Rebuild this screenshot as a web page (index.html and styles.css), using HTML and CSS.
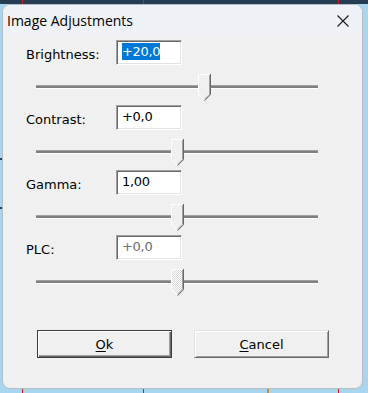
FILE: index.html
```html
<!DOCTYPE html>
<html lang="en">

<head>
    <meta charset="UTF-8">
    <meta name="viewport" content="width=device-width, initial-scale=1.0">
    <title>Image Adjustments</title>
    <link rel="stylesheet" href="styles.css">
</head>

<body>
    <div class="window">
        <div class="titlebar">
            <span class="title">Image Adjustments</span>
            <svg class="close" width="12" height="12" viewBox="0 0 12 12">
                <path d="M0.5 0.5L11.5 11.5M11.5 0.5L0.5 11.5" stroke="#1a1a1a" stroke-width="1.1" fill="none"/>
            </svg>
        </div>
        <div class="content">
            <div class="setting">
                <div class="field">
                    <span class="label">Brightness:</span>
                    <div class="edit"><span class="selected">+20,0</span></div>
                </div>
                <div class="trackbar">
                    <div class="channel"></div>
                    <svg class="thumb" style="left: 162px" width="13" height="27" viewBox="0 0 13 27">
                        <path d="M1 1H12V20.5L6.5 26L1 20.5Z" fill="#f0f0f0"/>
                        <path d="M0.5 20.5V0.5H12" fill="none" stroke="#fff"/>
                        <path d="M0.8 20.8L6.5 26.5" stroke="#fff"/>
                        <path d="M12.5 0V20.7L6.5 26.7" fill="none" stroke="#696969"/>
                        <path d="M11.5 1V20.3L6.5 25.3" fill="none" stroke="#a0a0a0"/>
                    </svg>
                </div>
            </div>

            <div class="setting">
                <div class="field">
                    <span class="label">Contrast:</span>
                    <div class="edit">+0,0</div>
                </div>
                <div class="trackbar">
                    <div class="channel"></div>
                    <svg class="thumb" style="left: 135px" width="13" height="27" viewBox="0 0 13 27">
                        <path d="M1 1H12V20.5L6.5 26L1 20.5Z" fill="#f0f0f0"/>
                        <path d="M0.5 20.5V0.5H12" fill="none" stroke="#fff"/>
                        <path d="M0.8 20.8L6.5 26.5" stroke="#fff"/>
                        <path d="M12.5 0V20.7L6.5 26.7" fill="none" stroke="#696969"/>
                        <path d="M11.5 1V20.3L6.5 25.3" fill="none" stroke="#a0a0a0"/>
                    </svg>
                </div>
            </div>

            <div class="setting">
                <div class="field">
                    <span class="label">Gamma:</span>
                    <div class="edit">1,00</div>
                </div>
                <div class="trackbar">
                    <div class="channel"></div>
                    <svg class="thumb" style="left: 135px" width="13" height="27" viewBox="0 0 13 27">
                        <path d="M1 1H12V20.5L6.5 26L1 20.5Z" fill="#f0f0f0"/>
                        <path d="M0.5 20.5V0.5H12" fill="none" stroke="#fff"/>
                        <path d="M0.8 20.8L6.5 26.5" stroke="#fff"/>
                        <path d="M12.5 0V20.7L6.5 26.7" fill="none" stroke="#696969"/>
                        <path d="M11.5 1V20.3L6.5 25.3" fill="none" stroke="#a0a0a0"/>
                    </svg>
                </div>
            </div>

            <div class="setting">
                <div class="field">
                    <span class="label">PLC:</span>
                    <div class="edit disabled">+0,0</div>
                </div>
                <div class="trackbar">
                    <div class="channel"></div>
                    <svg class="thumb" style="left: 135px" width="13" height="27" viewBox="0 0 13 27">
                        <defs>
                            <pattern id="dither" width="2" height="2" patternUnits="userSpaceOnUse">
                                <rect width="2" height="2" fill="#fff"/>
                                <rect width="1" height="1" fill="#d8d8d8"/>
                                <rect x="1" y="1" width="1" height="1" fill="#d8d8d8"/>
                            </pattern>
                        </defs>
                        <path d="M1 1H12V20.5L6.5 26L1 20.5Z" fill="url(#dither)"/>
                        <path d="M0.5 20.5V0.5H12" fill="none" stroke="#fff"/>
                        <path d="M0.8 20.8L6.5 26.5" stroke="#fff"/>
                        <path d="M12.5 0V20.7L6.5 26.7" fill="none" stroke="#696969"/>
                        <path d="M11.5 1V20.3L6.5 25.3" fill="none" stroke="#a0a0a0"/>
                    </svg>
                </div>
            </div>

            <div class="buttons">
                <div class="button default"><u>O</u>k</div>
                <div class="button"><u>C</u>ancel</div>
            </div>
        </div>
    </div>
</body>

</html>
```

FILE: styles.css
```css
body {
    margin: 0;
    height: 393px;
    overflow: hidden;
    font-family: "DejaVu Sans", Verdana, sans-serif;
    font-size: 13px;
    color: #000;
    background:
        linear-gradient(#e81123, #e81123) 22px 0 / 1px 4px no-repeat,
        linear-gradient(#e81123, #e81123) 143px 0 / 1px 4px no-repeat,
        linear-gradient(#e81123, #e81123) 338px 0 / 1px 4px no-repeat,
        linear-gradient(#e81123, #e81123) 22px 389px / 1px 4px no-repeat,
        linear-gradient(#e81123, #e81123) 143px 389px / 1px 4px no-repeat,
        linear-gradient(#c98a4a, #c98a4a) 267px 389px / 2px 4px no-repeat,
        linear-gradient(#e81123, #e81123) 338px 389px / 1px 4px no-repeat,
        linear-gradient(#2b3f52, #2b3f52) 0 158px / 2px 2px no-repeat,
        linear-gradient(#2b3f52, #2b3f52) 0 207px / 2px 2px no-repeat,
        linear-gradient(#263c52, #263c52) 0 0 / 100% 4px no-repeat,
        #a9d6ef;
}

.window {
    box-sizing: border-box;
    width: 361px;
    height: 385px;
    margin: 4px 0 0 2px;
    border: 1px solid #b4bcc4;
    border-radius: 8px;
    background-color: #f0f0f0;
    overflow: hidden;
}

.titlebar {
    display: flex;
    align-items: center;
    justify-content: space-between;
    height: 29px;
    padding-top: 1px;
    box-sizing: border-box;
    background-color: #eef2f7;
}

.title {
    padding-left: 4px;
    font-family: "Open Sans", "Noto Sans", sans-serif;
    font-size: 14px;
    color: #000;
}

.close {
    margin-right: 13px;
    margin-top: 2px;
}

.content {
    padding: 6px 0 0 23px;
}

.setting {
    height: 65px;
}

.field {
    display: flex;
    align-items: center;
    height: 25px;
}

.label {
    width: 90px;
    padding-top: 3px;
}

.edit {
    box-sizing: border-box;
    width: 66px;
    height: 25px;
    padding: 2px 0 0 5px;
    line-height: 17px;
    background-color: #fff;
    border-style: solid;
    border-width: 1px;
    border-color: #a0a0a0 #fff #fff #a0a0a0;
    box-shadow: inset 1px 1px #696969, inset -1px -1px #e3e3e3;
    letter-spacing: -0.3px;
}

.edit.disabled {
    color: #6d6d6d;
}

.selected {
    display: inline-block;
    background-color: #0078d7;
    color: #fff;
}

.trackbar {
    position: relative;
    width: 282px;
    height: 40px;
    margin-left: 10px;
}

.channel {
    position: relative;
    top: 20px;
    height: 2px;
    background-color: #808080;
    border-top: 1px solid #a0a0a0;
    border-bottom: 1px solid #fff;
}

.thumb {
    position: absolute;
    top: 9px;
}

.buttons {
    display: flex;
    gap: 22px;
    margin: 30px 0 0 11px;
}

.button {
    box-sizing: border-box;
    width: 135px;
    height: 28px;
    display: flex;
    align-items: center;
    justify-content: center;
    padding-top: 1px;
    border-style: solid;
    border-width: 1px;
    border-color: #e3e3e3 #696969 #696969 #e3e3e3;
    box-shadow: inset 1px 1px #fff, inset -1px -1px #a0a0a0;
}

.button.default {
    border-color: #3c3c3c;
    box-shadow: inset 1px 1px #fff, inset -1px -1px #696969, inset -2px -2px #a0a0a0;
}

.button u {
    text-decoration-thickness: 1px;
    text-underline-offset: 2px;
}
```
